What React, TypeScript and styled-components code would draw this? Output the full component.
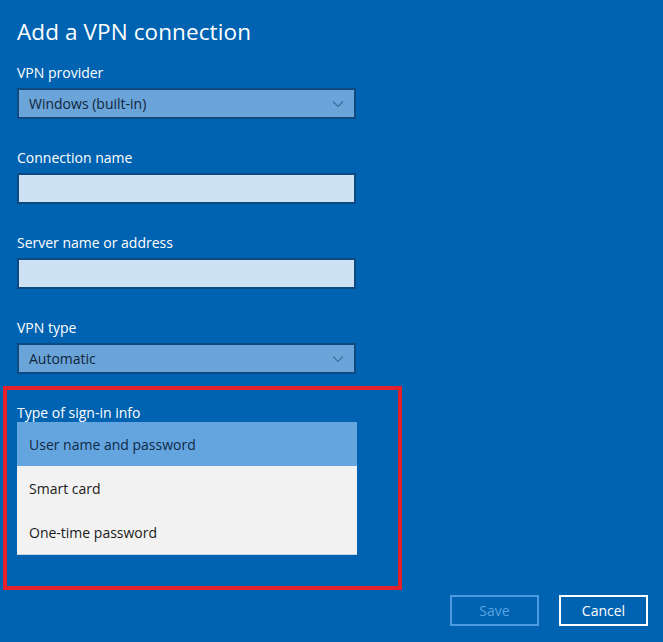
import styled, { createGlobalStyle } from "styled-components";
import { ReactElement } from "react";

const GlobalStyle = createGlobalStyle`
    html, body {
        margin: 0;
        padding: 0;
        background: #0063b1;
    }
    body {
        font-family: "Open Sans", "Noto Sans", sans-serif;
    }
`;

export default function App(): JSX.Element {
    return (
        <>
            <GlobalStyle />
            <Page>
                <Title>Add a VPN connection</Title>

                <Field>
                    <Label>VPN provider</Label>
                    <SelectBox value="Windows (built-in)" />
                </Field>

                <Field top={29}>
                    <Label>Connection name</Label>
                    <TextBox />
                </Field>

                <Field top={29}>
                    <Label>Server name or address</Label>
                    <TextBox />
                </Field>

                <Field top={29}>
                    <Label>VPN type</Label>
                    <SelectBox value="Automatic" />
                </Field>

                <Highlight>
                    <ListLabel>Type of sign-in info</ListLabel>
                    <OptionList>
                        <Option selected>User name and password</Option>
                        <Option>Smart card</Option>
                        <Option>One-time password</Option>
                    </OptionList>
                </Highlight>

                <Footer>
                    <Button disabled>Save</Button>
                    <Button>Cancel</Button>
                </Footer>
            </Page>
        </>
    );
}

/*        ---------------------        COMPONENTES        ---------------------        */

interface SelectBoxProps {
    value: string;
}

const SelectBox = ({ value }: SelectBoxProps): ReactElement => (
    <Select>
        <span>{value}</span>
        <svg width="12" height="8" viewBox="0 0 12 8">
            <path d="M1 1.5 L6 6.5 L11 1.5" fill="none" stroke="#3a6fa0" strokeWidth="1.2" />
        </svg>
    </Select>
);

/*        ---------------------        ESTILOS        ---------------------        */

const Page = styled.div`
    width: 663px;
    height: 642px;
    box-sizing: border-box;
    padding: 16px 0 0 17px;
    color: #ffffff;
    display: flex;
    flex-direction: column;
    overflow: hidden;
`;

const Title = styled.h1`
    margin: 0 0 15px 0;
    font-size: 22.5px;
    font-weight: 400;
    line-height: 32px;
    letter-spacing: 0.1px;
`;

const Field = styled.div<{ top?: number }>`
    display: flex;
    flex-direction: column;
    gap: 5px;
    margin-top: ${(p) => p.top ?? 0}px;
`;

const Label = styled.div`
    font-size: 14px;
    line-height: 20px;
    color: #ffffff;
`;

const ListLabel = styled(Label)`
    line-height: 18px;
`;

const Select = styled.div`
    width: 339px;
    height: 31px;
    box-sizing: border-box;
    border: 2px solid #0d4a82;
    background: #6aa4d8;
    display: flex;
    align-items: center;
    justify-content: space-between;
    padding: 0 10px 0 10px;
    font-size: 14px;
    color: #10253d;
`;

const TextBox = styled.div`
    width: 339px;
    height: 31px;
    box-sizing: border-box;
    border: 2px solid #0d4a82;
    background: #cce1f4;
`;

const Highlight = styled.div`
    margin: 12px 0 0 -14px;
    width: 399px;
    height: 204px;
    box-sizing: border-box;
    border: 4px solid #e3202c;
    padding: 14px 0 0 10px;
    display: flex;
    flex-direction: column;
`;

const OptionList = styled.div`
    width: 340px;
    background: #f2f2f2;
    display: flex;
    flex-direction: column;
    box-shadow: 0 1px 0 #c9d6e3;
`;

const Option = styled.div<{ selected?: boolean }>`
    height: 44px;
    display: flex;
    align-items: center;
    padding: 0 12px;
    font-size: 14px;
    color: ${(p) => (p.selected ? "#0f2a47" : "#1a1a1a")};
    background: ${(p) => (p.selected ? "#64a5e0" : "#f2f2f2")};
`;

const Footer = styled.div`
    display: flex;
    justify-content: flex-end;
    gap: 20px;
    margin-top: 5px;
    padding-right: 15px;
`;

const Button = styled.button`
    width: 89px;
    height: 31px;
    box-sizing: border-box;
    background: transparent;
    font-family: "Open Sans", "Noto Sans", sans-serif;
    font-size: 14px;
    border: 2px solid ${(p) => (p.disabled ? "#4c9be0" : "#ffffff")};
    color: ${(p) => (p.disabled ? "#5aa3e2" : "#ffffff")};
    padding: 0;
`;
